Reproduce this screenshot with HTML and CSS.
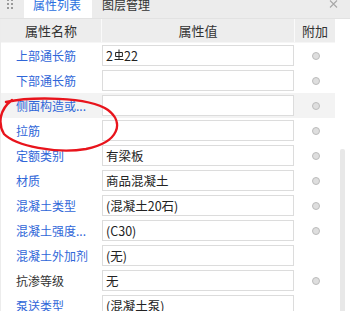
FILE: index.html
```html
<!DOCTYPE html>
<html lang="zh">
<head>
<meta charset="utf-8">
<link rel="stylesheet" href="styles.css">
</head>
<body>
<div class="panel">
  <div class="tabbar">
    <svg class="handle" width="6" height="10" viewBox="0 0 6 10"><rect x="0" y="0" width="2" height="2"/><rect x="4" y="0" width="2" height="2"/><rect x="0" y="4" width="2" height="2"/><rect x="4" y="4" width="2" height="2"/><rect x="0" y="8" width="2" height="2"/><rect x="4" y="8" width="2" height="2"/></svg>
    <div class="tab active">属性列表</div>
    <div class="tab">图层管理</div>
    <svg class="close" width="9" height="9" viewBox="0 0 9 9"><path d="M1 0.5 L8 7.5 M8 0.5 L1 7.5" stroke="#a8a8a8" stroke-width="1.1" fill="none"/></svg>
  </div>
  <div class="table">
    <div class="head">
      <div class="hcell">属性名称</div>
      <div class="hcell">属性值</div>
      <div class="hcell last">附加</div>
    </div>
    <div class="row">
      <div class="label">上部通长筋</div>
      <div class="val"><div class="box">2<svg class="bar" width="10" height="12" viewBox="0 0 10 12"><path d="M5 0.5 V10.5 M1.6 3.5 H8.4 V7.5 H1.6 Z M0.5 10.5 H9.5" stroke="#222" stroke-width="1" fill="none"/></svg>22</div></div>
      <div class="add"><span class="dot"></span></div>
    </div>
    <div class="row">
      <div class="label">下部通长筋</div>
      <div class="val"><div class="box"></div></div>
      <div class="add"><span class="dot"></span></div>
    </div>
    <div class="row sel">
      <div class="label">侧面构造或...</div>
      <div class="val"><div class="box"></div></div>
      <div class="add"><span class="dot"></span></div>
    </div>
    <div class="row">
      <div class="label">拉筋</div>
      <div class="val"><div class="box"></div></div>
      <div class="add"><span class="dot"></span></div>
    </div>
    <div class="row">
      <div class="label">定额类别</div>
      <div class="val"><div class="box">有梁板</div></div>
      <div class="add"><span class="dot"></span></div>
    </div>
    <div class="row">
      <div class="label">材质</div>
      <div class="val"><div class="box">商品混凝土</div></div>
      <div class="add"><span class="dot"></span></div>
    </div>
    <div class="row">
      <div class="label">混凝土类型</div>
      <div class="val"><div class="box">(混凝土20石)</div></div>
      <div class="add"><span class="dot"></span></div>
    </div>
    <div class="row">
      <div class="label">混凝土强度...</div>
      <div class="val"><div class="box">(C30)</div></div>
      <div class="add"><span class="dot"></span></div>
    </div>
    <div class="row">
      <div class="label">混凝土外加剂</div>
      <div class="val"><div class="box">(无)</div></div>
      <div class="add"></div>
    </div>
    <div class="row">
      <div class="label black">抗渗等级</div>
      <div class="val"><div class="box">无</div></div>
      <div class="add"><span class="dot"></span></div>
    </div>
    <div class="row">
      <div class="label">泵送类型</div>
      <div class="val"><div class="box">(混凝土泵)</div></div>
      <div class="add"></div>
    </div>
  </div>
  <div class="scrollbar"></div>
  <svg class="mark" width="130" height="60" viewBox="0 0 130 60"><path d="M6 6 C30 1, 88 0, 108 14 C124 26, 120 46, 86 53 C56 58, 16 50, 4 38 C-2 28, -1 14, 12 4" stroke="#e8141c" stroke-width="2.4" fill="none" stroke-linecap="round"/></svg>
</div>
</body>
</html>
```
FILE: styles.css
```css
* { box-sizing: border-box; }
html, body { margin: 0; padding: 0; background: #fff; }
body {
  font-family: "Noto Sans CJK SC", "Noto Sans", sans-serif;
  font-size: 12px;
  color: #333;
  width: 350px;
  height: 311px;
  overflow: hidden;
}
.panel {
  position: relative;
  width: 350px;
  height: 311px;
  overflow: hidden;
}
.tabbar {
  height: 19px;
  background: #ececec;
  border-bottom: 1px solid #e2e2e2;
  display: flex;
  align-items: flex-start;
}
.handle { fill: #9a9a9a; margin: -1px 0 0 7px; flex: none; }
.tab {
  height: 18px;
  line-height: 10px;
  padding: 0 9px;
  color: #333;
}
.tab.active {
  margin-left: 11px;
  width: 68px;
  background: #fff;
  color: #2a6fe0;
}
.tab + .tab { padding-left: 10px; }
.close { margin: 0 0 0 auto; margin-right: 12px; margin-top: 0; }
.table { width: 335px; border-left: 1px solid #ececec; }
.head {
  display: grid;
  grid-template-columns: 101px 193px 40px;
  height: 24px;
  background: #ededed;
  border-bottom: 1px solid #f6f6f6;
}
.hcell {
  display: flex;
  align-items: center;
  justify-content: center;
  border-right: 1px solid #fafafa;
  font-size: 13px;
  color: #333;
}
.hcell.last { border-right: none; }
.row {
  display: grid;
  grid-template-columns: 101px 193px 40px;
  height: 25px;
}
.row.sel { background: #f3f3f3; }
.label {
  display: flex;
  align-items: center;
  padding-left: 15px;
  color: #2f66d8;
  white-space: nowrap;
  overflow: hidden;
}
.label.black { color: #333; }
.val { padding: 2px 0 0 0; }
.box {
  width: 192px;
  height: 21px;
  border: 1px solid #dcdcdc;
  background: #fff;
  padding: 0 0 0 3px;
  display: flex;
  align-items: center;
  color: #222;
  font-size: 12.5px;
}
.bar { margin: 0 0 1px 1px; }
.add { display: flex; align-items: center; justify-content: center; }
.dot {
  width: 8px;
  height: 8px;
  border-radius: 50%;
  background: #dedede;
  border: 1px solid #bcbcbc;
  margin-left: 2px;
}
.scrollbar {
  position: absolute;
  left: 340px;
  top: 149px;
  width: 5px;
  height: 170px;
  background: #e8e8e8;
  border-radius: 2px;
}
.mark {
  position: absolute;
  left: 0;
  top: 96px;
  overflow: visible;
}
```
